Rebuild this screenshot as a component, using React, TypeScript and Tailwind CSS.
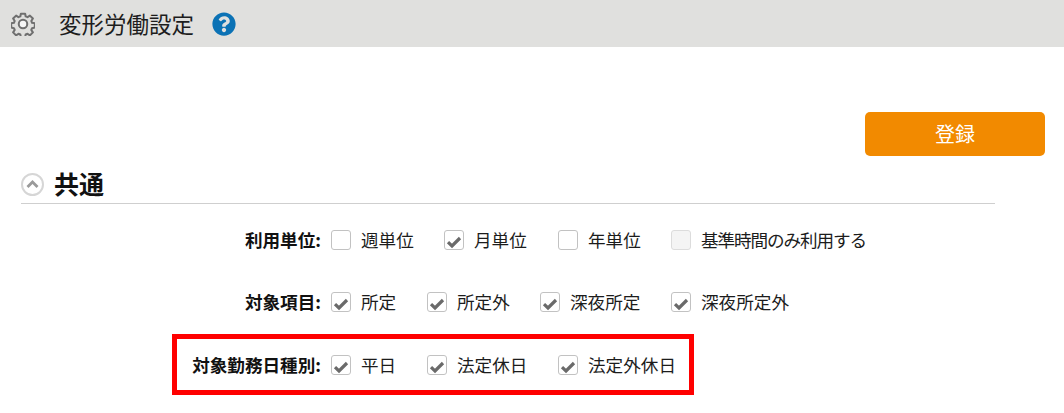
import React from "react";
import { FaQuestionCircle } from "react-icons/fa";

const font = "font-['Meiryo','Noto_Sans_CJK_JP','Noto_Sans_CJK_SC',sans-serif]";

function Gear() {
  return (
    <svg width="24" height="24" viewBox="0 0 26 26" fill="none" className="shrink-0">
      <path
        d="M10.7 1.8h4.6l.6 3 2 .8 2.6-1.7 3.2 3.2-1.7 2.6.8 2 3 .6v4.6l-3 .6-.8 2 1.7 2.6-3.2 3.2-2.6-1.7-2 .8-.6 3h-4.6l-.6-3-2-.8-2.6 1.7-3.2-3.2 1.7-2.6-.8-2-3-.6v-4.6l3-.6.8-2-1.7-2.6 3.2-3.2 2.6 1.7 2-.8z"
        stroke="#6f6f6f"
        strokeWidth="2.2"
        strokeLinejoin="round"
      />
      <circle cx="13" cy="13" r="4.6" stroke="#6f6f6f" strokeWidth="2.2" fill="#f6f6f6" />
    </svg>
  );
}

function Check({ checked, disabled }: { checked?: boolean; disabled?: boolean }) {
  return (
    <span
      className={
        disabled
          ? "flex h-5 w-5 shrink-0 items-center justify-center rounded-[3px] border border-[#dcdcdc] bg-[#f4f4f4]"
          : "flex h-5 w-5 shrink-0 items-center justify-center rounded-[3px] border border-[#c2c2c2] bg-white"
      }
    >
      {checked && (
        <svg width="16" height="14" viewBox="0 0 16 14" className="mt-[3px]">
          <path d="M2 7.2 6 11 14 3" stroke="#6a6a6a" strokeWidth="3.2" fill="none" />
        </svg>
      )}
    </span>
  );
}

function Item({
  text,
  checked,
  disabled,
  w,
  tight,
}: {
  text: string;
  checked?: boolean;
  disabled?: boolean;
  w: string;
  tight?: boolean;
}) {
  return (
    <label className={`flex items-center ${w}`}>
      <Check checked={checked} disabled={disabled} />
      <span
        className={
          tight
            ? "ml-[10px] whitespace-nowrap text-[17.6px] leading-6 tracking-[-1.1px] text-[#1c1c1c]"
            : "ml-[10px] whitespace-nowrap text-[17.6px] leading-6 text-[#1c1c1c]"
        }
      >
        {text}
      </span>
    </label>
  );
}

function Row({ label, className, children }: { label: string; className: string; children: React.ReactNode }) {
  return (
    <div className={`flex items-center ${className}`}>
      <div className="w-[310px] shrink-0 whitespace-nowrap pr-[10px] text-right text-[17.6px] font-bold leading-6 text-[#111]">
        {label}
      </div>
      {children}
    </div>
  );
}

export default function App() {
  return (
    <div className={`relative h-[413px] w-[1064px] overflow-hidden bg-white ${font}`}>
      <header className="flex h-[47px] items-center bg-[#e0e0de] pl-[11px]">
        <Gear />
        <h1 className="ml-[24px] text-[22.5px] font-normal leading-none text-[#1d1d1d]">変形労働設定</h1>
        <FaQuestionCircle className="ml-[18px] h-6 w-6 text-[#0b72b5]" />
      </header>

      <div className="mt-[65px] flex justify-end pr-[19px]">
        <button className="h-11 w-[180px] rounded-[5px] bg-[#f28a00] text-[20px] text-white">登録</button>
      </div>

      <section className="ml-[21px] mt-[16px] w-[974px]">
        <div className="flex h-[31px] items-start border-b border-[#cfcfcf] box-content">
          <span className="mt-[1px] flex h-[23px] w-[23px] items-center justify-center rounded-full border-2 border-[#d6d6d6] bg-white">
            <svg width="13" height="13" viewBox="0 0 13 13">
              <path d="M1.5 9 6.5 4 11.5 9" stroke="#9a9a9a" strokeWidth="2.8" fill="none" />
            </svg>
          </span>
          <h2 className="ml-[10px] -mt-[2px] text-[25px] font-bold leading-[26px] text-[#111]">共通</h2>
        </div>

        <Row label="利用単位:" className="mt-[24px]">
          <Item w="w-[113px]" text="週単位" />
          <Item w="w-[114px]" text="月単位" checked />
          <Item w="w-[113px]" text="年単位" />
          <Item w="w-auto" text="基準時間のみ利用する" disabled tight />
        </Row>
        <Row label="対象項目:" className="mt-[38px]">
          <Item w="w-[96px]" text="所定" checked />
          <Item w="w-[113px]" text="所定外" checked />
          <Item w="w-[131px]" text="深夜所定" checked />
          <Item w="w-auto" text="深夜所定外" checked />
        </Row>
        <Row label="対象勤務日種別:" className="mt-[39px]">
          <Item w="w-[96px]" text="平日" checked />
          <Item w="w-[131px]" text="法定休日" checked />
          <Item w="w-auto" text="法定外休日" checked />
        </Row>
      </section>

      <div className="pointer-events-none absolute left-[172px] top-[334px] h-[61px] w-[522px] border-[5px] border-[#ff0000]" />
    </div>
  );
}
